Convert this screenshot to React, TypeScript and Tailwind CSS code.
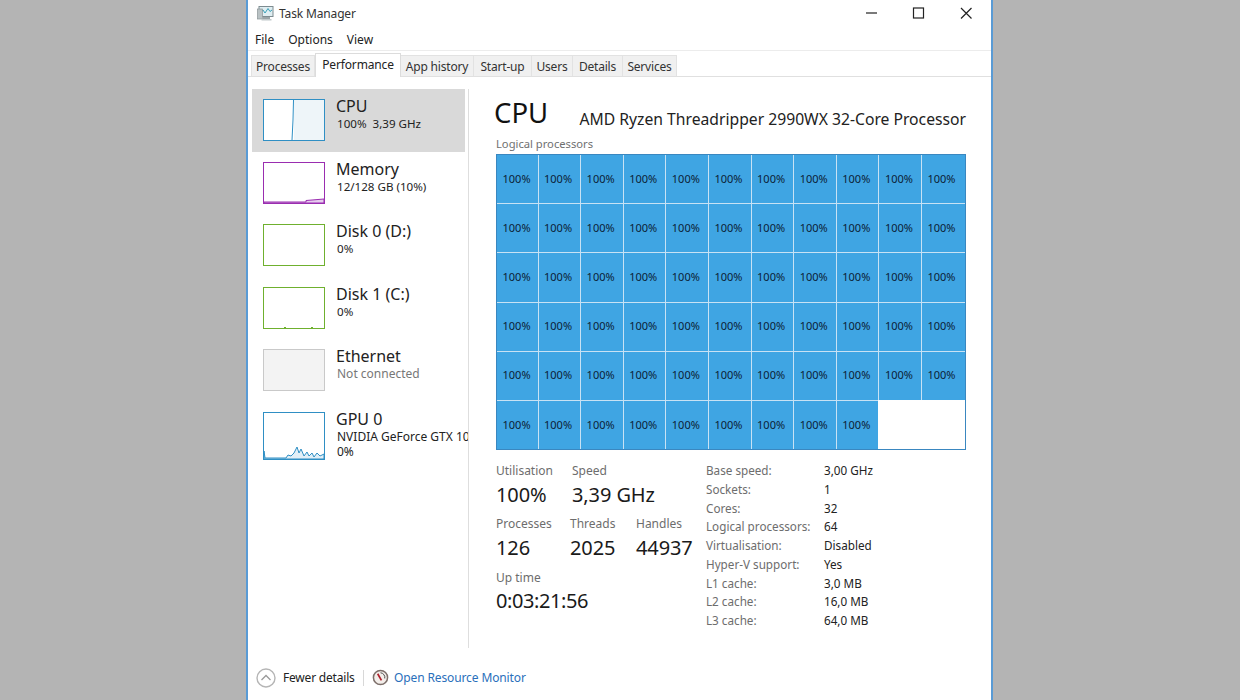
import React from "react";

const font = { fontFamily: '"Noto Sans", "Open Sans", sans-serif' };

function Thumb({ border, bg = "bg-white", tall, children }: { border: string; bg?: string; tall?: boolean; children?: React.ReactNode }) {
  return <div className={`w-[62px] border shrink-0 relative overflow-hidden ${tall ? "h-[48px]" : "h-[42px]"} ${border} ${bg}`}>{children}</div>;
}

function SideItem({ title, lines, thumb, active, muted, wide }: { title: string; lines: string[]; thumb: React.ReactNode; active?: boolean; muted?: boolean; wide?: boolean }) {
  return (
    <div className={`h-[62.5px] pl-[11px] pt-[10px] flex gap-[11px] w-[213px] overflow-visible ${active ? "bg-[#d9d9d9]" : ""}`}>
      {thumb}
      <div className="whitespace-pre -mt-[3px] w-[132px] shrink-0 overflow-hidden">
        <div className="text-[16px] leading-[20px] text-[#222]">{title}</div>
        {lines.map((l) => (
          <div key={l} className={`pl-px leading-[15.5px] ${wide ? "text-[12px]" : "text-[11.6px]"} ${muted ? "text-[#777]" : "text-[#222]"}`}>{l}</div>
        ))}
      </div>
    </div>
  );
}

const Tab = ({ children, active, w }: { children: string; active?: boolean; w: string }) =>
  active ? (
    <div className={`h-[24px] mb-[-1px] self-end pt-[1px] bg-white border border-b-0 border-[#dcdcdc] text-[12px] tracking-[-0.15px] leading-[20px] text-[#222] text-center relative ${w}`}>{children}</div>
  ) : (
    <div className={`h-[21px] bg-[#f0f0f0] border-r border-t border-[#e2e2e2] text-[12px] tracking-[-0.2px] leading-[21px] text-[#333] text-center first:border-l ${w}`}>{children}</div>
  );

function Stat({ label, value, className, tight }: { label: string; value: string; className: string; tight?: boolean }) {
  return (
    <div className={className}>
      <div className="text-[12px] leading-[16px] text-[#6d6d6d]">{label}</div>
      <div className={`text-[20px] leading-[28px] text-[#1a1a1a] ${tight ? "mt-px tracking-[-0.4px]" : "mt-[2px] tracking-[-0.1px]"}`}>{value}</div>
    </div>
  );
}

const specs = [
  ["Base speed:", "3,00 GHz"],
  ["Sockets:", "1"],
  ["Cores:", "32"],
  ["Logical processors:", "64"],
  ["Virtualisation:", "Disabled"],
  ["Hyper-V support:", "Yes"],
  ["L1 cache:", "3,0 MB"],
  ["L2 cache:", "16,0 MB"],
  ["L3 cache:", "64,0 MB"],
];

export default function App() {
  return (
    <div style={font} className="w-[1240px] h-[700px] bg-[#b4b4b4] flex overflow-hidden pl-[246px]">
      <div className="w-[747px] h-[700px] shrink-0 bg-white border-x-2 border-[#5a9bd5] flex flex-col">
        {/* title bar */}
        <div className="h-[27px] shrink-0 flex items-center pl-[9px]">
          <svg width="18" height="17" viewBox="0 0 18 17" className="mr-[4px]">
            <rect x="2" y="1.5" width="14" height="10" fill="#dfeef2" stroke="#7d8b90" />
            <path d="M3 8 L6 5 L8 8 L11 3.5 L13 6.5 L15 5" fill="none" stroke="#3aa0b8" strokeWidth="1" />
            <rect x="0.5" y="4" width="5" height="10" fill="#b9c2c4" stroke="#8b9598" strokeWidth="0.7" />
            <rect x="6" y="12" width="7" height="2" fill="#9aa4a7" />
            <rect x="4.5" y="14" width="10" height="1.5" fill="#c2c9cb" />
          </svg>
          <span className="text-[12px] tracking-[-0.15px] text-[#333] mt-px">Task Manager</span>
          <svg width="110" height="14" viewBox="0 0 110 14" className="ml-auto mr-[15px] -mt-[2px]" fill="none" stroke="#222" strokeWidth="1.2">
            <path d="M0 7h11" />
            <rect x="47.5" y="2" width="10" height="10" />
            <path d="M95 2l10.5 10.5M105.5 2L95 12.5" />
          </svg>
        </div>
        {/* menu */}
        <div className="h-[24px] shrink-0 flex items-center gap-[14px] pl-[7px] pt-[3px] text-[12px] text-[#222] border-b border-[#ececec]">
          <span>File</span>
          <span>Options</span>
          <span>View</span>
        </div>
        {/* tabs */}
        <div className="h-[26px] shrink-0 flex items-end pl-[3px] border-b border-[#e0e0e0]">
          <Tab w="w-[64px]">Processes</Tab>
          <Tab w="w-[86px]" active>Performance</Tab>
          <Tab w="w-[73px]">App history</Tab>
          <Tab w="w-[58px]">Start-up</Tab>
          <Tab w="w-[41px]">Users</Tab>
          <Tab w="w-[50px]">Details</Tab>
          <Tab w="w-[54px]">Services</Tab>
        </div>
        {/* body */}
        <div className="flex-1 flex min-h-0">
          <div className="w-[221px] shrink-0 mt-[12px] mb-[9px] pl-[4px] border-r border-[#dedede]">
            <SideItem
              active
              title="CPU"
              lines={["100%  3,39 GHz"]}
              thumb={
                <Thumb border="border-[#2f8fc4]" bg="bg-white">
                  <div className="absolute top-0 bottom-0 right-0 w-[30px] bg-[#eef5f9]" />
                  <svg className="absolute inset-0" width="60" height="40">
                    <path d="M28 40 L29 20 L29.5 0" fill="none" stroke="#2f8fc4" strokeWidth="1" />
                  </svg>
                </Thumb>
              }
            />
            <SideItem
              title="Memory"
              lines={["12/128 GB (10%)"]}
              thumb={
                <Thumb border="border-[#9a2db0]">
                  <svg className="absolute inset-0" width="60" height="40">
                    <path d="M42 39 L42 37.5 L60 36 L60 40 L0 40 L0 39 Z" fill="#e6cdee" stroke="#9a2db0" strokeWidth="1" />
                  </svg>
                </Thumb>
              }
            />
            <SideItem title="Disk 0 (D:)" lines={["0%"]} thumb={<Thumb border="border-[#6fb02e]" />} />
            <SideItem
              title="Disk 1 (C:)"
              lines={["0%"]}
              thumb={
                <Thumb border="border-[#6fb02e]">
                  <svg className="absolute inset-0" width="60" height="40">
                    <path d="M20 39.5 h2 M47 39.5 h2" stroke="#6fb02e" strokeWidth="1" />
                  </svg>
                </Thumb>
              }
            />
            <SideItem title="Ethernet" lines={["Not connected"]} muted wide thumb={<Thumb border="border-[#c9c9c9]" bg="bg-[#f3f3f3]" />} />
            <SideItem
              title="GPU 0"
              wide
              lines={["NVIDIA GeForce GTX 1060", "0%"]}
              thumb={
                <Thumb tall border="border-[#2f8fc4]">
                  <svg className="absolute inset-0" width="60" height="46">
                    <path
                      d="M0 38 L1 45 L22 45 L24 42 L27 43 L30 40 L33 34 L35 40 L37 36 L40 43 L43 39 L45 43 L48 40 L50 44 L53 40 L56 43 L60 41 L60 46 L0 46 Z"
                      fill="#e2eff7"
                      stroke="#2f8fc4"
                      strokeWidth="1"
                    />
                  </svg>
                </Thumb>
              }
            />
          </div>
          <div className="flex-1 pl-[27px] pr-[25px] min-w-0">
            <div className="flex items-end h-[46px] mt-[13px] whitespace-nowrap justify-between">
              <span className="text-[27.5px] leading-[38px] text-[#111] -ml-[2px] mb-[4px]">CPU</span>
              <span className="text-[15.7px] leading-[24px] text-[#222] mb-[5px]">AMD Ryzen Threadripper 2990WX 32-Core Processor</span>
            </div>
            <div className="text-[11.2px] leading-[14px] text-[#707070] mt-[1px] mb-[3px]">Logical processors</div>
            <div className="h-[296px] border border-[#3a87c0] grid grid-cols-[40.5px_repeat(9,1fr)_43px] grid-rows-6 gap-px bg-[#c8e2f4]">
              {Array.from({ length: 64 }).map((_, i) => (
                <div key={i} className="bg-[#3fa5e3] flex items-center justify-start pl-[5.5px] text-[11px] text-[#0c2236]">
                  100%
                </div>
              ))}
              <div className="col-span-2 bg-white -mt-px -ml-px" />
            </div>
            <div className="flex mt-[13px]">
              <div className="w-[210px] shrink-0">
                <div className="flex">
                  <Stat className="w-[76px]" label="Utilisation" value="100%" />
                  <Stat className="" label="Speed" value="3,39 GHz" />
                </div>
                <div className="flex mt-[7px]">
                  <Stat className="w-[74px]" label="Processes" value="126" />
                  <Stat className="w-[66px]" label="Threads" value="2025" />
                  <Stat className="" label="Handles" value="44937" />
                </div>
                <Stat className="mt-[8px]" tight label="Up time" value="0:03:21:56" />
              </div>
              <div className="grid grid-cols-[118px_1fr] auto-rows-[18.75px] text-[11.7px] leading-[18.75px] -mt-[2px]">
                {specs.map(([k, v]) => (
                  <React.Fragment key={k}>
                    <div className="text-[#6d6d6d] whitespace-nowrap">{k}</div>
                    <div className="text-[#222]">{v}</div>
                  </React.Fragment>
                ))}
              </div>
            </div>
          </div>
        </div>
        {/* footer */}
        <div className="h-[43px] shrink-0 flex items-center pl-[8px] pb-[2px] text-[12px]">
          <svg width="20" height="20" viewBox="0 0 20 20" fill="none">
            <circle cx="10" cy="10" r="9" stroke="#b5b5b5" strokeWidth="1.4" />
            <path d="M5.5 12L10 7.5l4.5 4.5" stroke="#9a9a9a" strokeWidth="1.3" />
          </svg>
          <span className="ml-[7px] w-[71px] whitespace-nowrap tracking-[-0.2px] text-[#222]">Fewer details</span>
          <div className="w-px h-[16px] bg-[#d8d8d8] ml-[9px] mr-[8px]" />
          <svg width="17" height="17" viewBox="0 0 18 18" fill="none">
            <circle cx="9" cy="9" r="7.5" fill="#f3eeea" stroke="#7d6f6a" strokeWidth="1.6" />
            <path d="M6 5l4 7" stroke="#b0202c" strokeWidth="1.8" />
            <path d="M9 4a5 5 0 0 1 4.5 6" stroke="#444" strokeWidth="1" />
          </svg>
          <span className="ml-[5px] tracking-[-0.12px] text-[#2a6fbb]">Open Resource Monitor</span>
        </div>
      </div>
    </div>
  );
}
